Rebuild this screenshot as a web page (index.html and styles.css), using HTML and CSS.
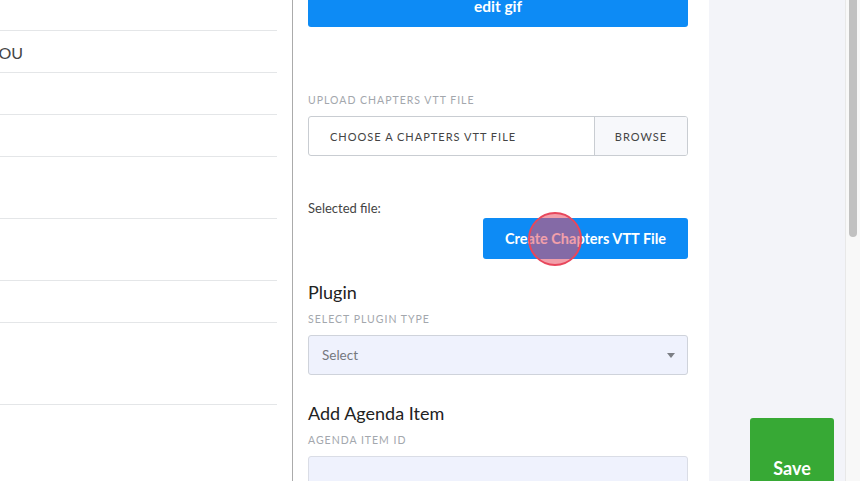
FILE: index.html
```html
<!DOCTYPE html>
<html>
<head>
<meta charset="utf-8">
<link rel="stylesheet" href="styles.css">
</head>
<body>
<div class="page">
  <div class="list-panel">
    <div class="row h31"></div>
    <div class="row h42"><span class="row-text">YOU</span></div>
    <div class="row h42"></div>
    <div class="row h42"></div>
    <div class="row h62"></div>
    <div class="row h62"></div>
    <div class="row h42"></div>
    <div class="row h82"></div>
  </div>
  <div class="form-panel">
    <div class="form">
      <button class="btn btn-blue btn-full">edit gif</button>
      <div class="label label-upload">UPLOAD CHAPTERS VTT FILE</div>
      <div class="file-input">
        <span class="file-name">CHOOSE A CHAPTERS VTT FILE</span>
        <span class="file-browse">BROWSE</span>
      </div>
      <div class="selected">Selected file:</div>
      <div class="create-row">
        <button class="btn btn-blue btn-create">Create Chapters VTT File</button>
        <span class="cursor"></span>
      </div>
      <h2 class="heading">Plugin</h2>
      <div class="label">SELECT PLUGIN TYPE</div>
      <div class="select">
        <span>Select</span>
        <span class="caret"></span>
      </div>
      <h2 class="heading heading-agenda">Add Agenda Item</h2>
      <div class="label">AGENDA ITEM ID</div>
      <div class="text-input"></div>
    </div>
  </div>
  <div class="side">
    <button class="save">Save</button>
  </div>
  <div class="scrollbar"><div class="thumb"></div></div>
</div>
</body>
</html>
```
FILE: styles.css
```css
* { box-sizing: border-box; }
html, body { margin: 0; padding: 0; }
body {
  font-family: "Source Sans Pro", Lato, "Noto Sans", sans-serif;
  color: #333;
  background: #fff;
}
.page {
  display: flex;
  width: 860px;
  height: 481px;
  overflow: hidden;
}
.list-panel {
  width: 293px;
  flex: none;
  border-right: 1px solid #ababab;
  padding-right: 15px;
  overflow: hidden;
}
.row {
  border-bottom: 1px solid #e4e6e8;
  display: flex;
  align-items: center;
}
.h31 { height: 31px; }
.h42 { height: 42px; }
.h62 { height: 62px; }
.h82 { height: 82px; }
.row-text {
  font-size: 16px;
  color: #444;
  margin-left: -11px;
  margin-top: 1px;
}
.form-panel {
  width: 416px;
  flex: none;
  padding: 0 21px 0 15px;
  background: #fff;
}
.form {
  margin-top: -13px;
  display: flex;
  flex-direction: column;
}
.btn {
  border: none;
  border-radius: 3px;
  color: #fff;
  font-family: inherit;
  font-weight: 700;
  font-size: 14px;
  cursor: pointer;
}
.btn-blue { background: #0d8bf5; }
.btn-full {
  width: 100%;
  height: 40px;
  padding-top: 0;
  padding-bottom: 3px;
  font-size: 15.5px;
}
.label {
  font-size: 10.5px;
  letter-spacing: 1px;
  color: #a3a7ad;
  margin-bottom: 10px;
}
.label-upload { margin-top: 67px; }
.file-input {
  display: flex;
  height: 40px;
  border: 1px solid #c9cdd2;
  border-radius: 3px;
  overflow: hidden;
}
.file-name {
  flex: 1;
  display: flex;
  align-items: center;
  padding-left: 21px;
  font-size: 11px;
  letter-spacing: 1px;
  color: #444;
}
.file-browse {
  width: 93px;
  display: flex;
  align-items: center;
  justify-content: center;
  background: #f7f8fb;
  border-left: 1px solid #c9cdd2;
  font-size: 11px;
  letter-spacing: 1px;
  color: #444;
}
.selected {
  margin-top: 44px;
  font-size: 13px;
  color: #444;
}
.create-row {
  position: relative;
  display: flex;
  justify-content: flex-end;
  margin-top: 2px;
}
.btn-create {
  width: 205px;
  height: 41px;
  font-size: 14.5px;
}
.cursor {
  position: absolute;
  left: 220px;
  top: -6px;
  width: 54px;
  height: 54px;
  border-radius: 50%;
  border: 2px solid #e8475c;
  background: rgba(232, 80, 100, 0.55);
}
.heading {
  font-size: 18px;
  font-weight: 400;
  color: #222;
  margin: 22px 0 10px;
}
.heading-agenda { margin-top: 27px; }
.select {
  height: 40px;
  border: 1px solid #cfd3db;
  border-radius: 3px;
  background: #eff2fd;
  display: flex;
  align-items: center;
  justify-content: space-between;
  padding: 0 12px 0 13px;
  font-size: 13.5px;
  color: #75787d;
}
.caret {
  width: 0;
  height: 0;
  border-left: 4px solid transparent;
  border-right: 4px solid transparent;
  border-top: 5px solid #7c7f85;
}
.text-input {
  height: 40px;
  border: 1px solid #dadde6;
  border-radius: 3px;
  background: #eff2fd;
}
.side {
  flex: 1;
  background: #f3f4f9;
  display: flex;
  align-items: flex-end;
  justify-content: flex-end;
  padding-right: 11px;
}
.save {
  width: 84px;
  height: 70px;
  margin-bottom: -7px;
  background: #37a935;
  border: none;
  border-radius: 3px;
  color: #fff;
  font-family: inherit;
  font-weight: 700;
  font-size: 18px;
  padding-top: 30px;
}
.scrollbar {
  width: 15px;
  flex: none;
  background: #f8f8f8;
  border-left: 1px solid #e8e8e8;
  padding: 0 3px 0 3px;
}
.thumb {
  height: 237px;
  background: #c1c1c1;
  border-radius: 0 0 5px 5px;
}
```
